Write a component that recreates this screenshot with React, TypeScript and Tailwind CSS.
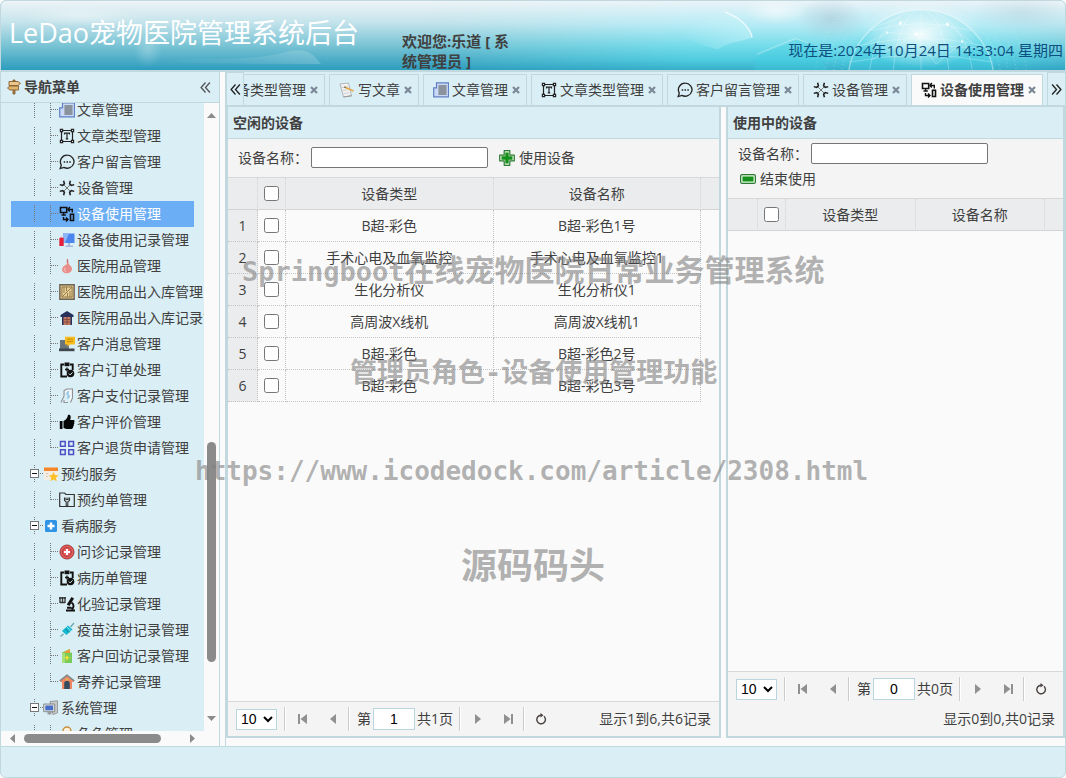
import { useState } from 'react';
import type { ReactNode } from 'react';

// 16px icons used by the menu tree and the tabs
const icons: Record<string, ReactNode> = {
  signpost: (
    <>
      <path d="M7 1h2v14H7z" fill="#b98a4c" stroke="#7a5223" strokeWidth=".8" />
      <path d="M3 2.500h9l2.500 2-2.500 2H3z" fill="#e9c68d" stroke="#8a5d2a" strokeWidth=".9" />
      <path d="M12.500 7H4L1.500 9 4 11h8.500z" fill="#dfb574" stroke="#8a5d2a" strokeWidth=".9" />
    </>
  ),
  write: (
    <>
      <path d="M1 2 9.500 1l3 12.500-8 1.500z" fill="#f1f1ef" stroke="#aab0b5" strokeWidth=".9" />
      <path d="M2.500 5.500 9 4.800M3.500 8.500l5-.6M4.500 11.500l6-.8" stroke="#c3c8cc" strokeWidth=".8" />
      <path d="m6.500 5.500 8 3.500" stroke="#e3a94a" strokeWidth="1.800" />
      <path d="m5.200 4.900 1.600.8" stroke="#7b6a4a" strokeWidth="1.300" />
      <path d="M4.500 15 13 13.800" stroke="#999" strokeWidth="1" />
    </>
  ),
  article: (
    <>
      <path d="M3.500.8h12v14H.7v-9h2.800z" fill="#c9d9f6" stroke="#5f7fc4" strokeWidth="1.200" />
      <path d="M5.500 3h8v10h-8z" fill="#9aa3ad" />
      <path d="M5.500 4h8M5.500 6h8M5.500 8h8M5.500 10h8M5.500 12h8" stroke="#737b85" strokeWidth=".8" />
    </>
  ),
  type: (
    <>
      <path d="M2.500 2.500h11v11h-11z" fill="none" stroke="#222" strokeWidth="1.200" />
      <path d="M.8.800h3.400v3.400H.8zM11.800.800h3.400v3.400h-3.400zM.8 11.800h3.400v3.400H.8zM11.800 11.800h3.400v3.400h-3.400z" fill="#222" />
      <path d="M2 2h1v1H2zM13 2h1v1h-1zM2 13h1v1H2zM13 13h1v1h-1z" fill="#daeef5" />
      <path d="M5.500 6.500V5.200h5v1.300M8 5.200v5.600M6.800 10.800h2.400" fill="none" stroke="#222" strokeWidth="1.200" />
    </>
  ),
  message: (
    <>
      <path d="M8.300 1.200a6.800 6.500 0 1 1-3.400 12.200L1.200 14.600l1.100-3.500A6.600 6.600 0 0 1 8.300 1.200z" fill="none" stroke="#222" strokeWidth="1.300" />
      <path d="M4.700 7.200h1.500v1.500H4.700zM7.500 7.200H9v1.500H7.500zM10.300 7.200h1.500v1.500h-1.500z" fill="#222" />
    </>
  ),
  device: (
    <>
      <path d="m4.500 4.500 7 7M11.500 4.500l-7 7" stroke="#777" strokeWidth="1" />
      <path
        d="M.8 4.600 3.700 5.400 5.400 3.700 4.600.800M15.200 4.600l-2.900.8-1.700-1.700.8-2.900M.8 11.400l2.900-.8 1.700 1.700-.8 2.900M15.200 11.400l-2.900-.8-1.700 1.700.8 2.900"
        fill="none"
        stroke="#1c1c1c"
        strokeWidth="1.500"
      />
    </>
  ),
  usage: (
    <>
      <path d="M1.500 1.500h6.200v5H1.500z" fill="none" stroke="#111" strokeWidth="1.600" />
      <path d="M4.600 7v2M2.500 9h4.300" stroke="#111" strokeWidth="1.400" />
      <path d="M11.500 8.200h3v6.300h-3z" fill="none" stroke="#111" strokeWidth="1.600" />
      <path d="M9.500 3.500h3.800v3M10.800 1 9 3.500l1.800 2M4.500 11v2.500h4M7 11.500l2 2L7 15.500" fill="none" stroke="#111" strokeWidth="1.400" />
    </>
  ),
  usageLog: (
    <>
      <path d="M4 1.500h11.500v9.500H4z" fill="#4b86ee" />
      <path d="M5 1.500h5l-4 9.500H4V3z" fill="#8cb6f8" />
      <path d="M9 11h2v3H9zM6.500 13.500h7.500V15H6.500z" fill="#a6b8dc" />
      <path d="M.3 6h4.400v8H.3z" fill="#e3213c" />
      <path d="M1 4.800h3V6H1z" fill="#f08b98" />
    </>
  ),
  supplies: (
    <>
      <path d="M8.500.8C7.500 3 9 4.500 7.500 6.500 5 7.500 2.700 9.500 3.200 12.500c.5 2 2.500 2.900 4.800 2.800 2.800 0 4.900-1.700 5-4.200 0-2.300-1.600-3.300-3.200-5C9.200 4.500 9.800 2.500 8.500.8z" fill="#e88f8b" />
      <path d="M6 10c-1 1.500-.5 3 .8 3.700" stroke="#f9c8c4" fill="none" />
      <path d="M8.300 1v4" stroke="#c45f60" strokeWidth=".9" />
    </>
  ),
  crate: (
    <>
      <path d="M.8.800h14.400v14.400H.8z" fill="#d8bd83" stroke="#6f6658" strokeWidth="1.400" />
      <path d="M3 3h10v10H3z" fill="#e6cf99" stroke="#8f7747" strokeWidth=".9" />
      <path d="m3 13 10-10M5 3v6M7.500 3v4M8.500 9v4M11 7v6" stroke="#967c48" strokeWidth="1" />
    </>
  ),
  warehouse: (
    <>
      <path d="M8 1 1.500 5v2H3v8h10V7h1.500V5z" fill="#26315c" />
      <path d="M4.500 7h7v8h-7z" fill="#c07862" />
      <path d="M4.500 9.500h7M4.500 12h7M8 7v8" stroke="#7f4538" strokeWidth=".8" />
    </>
  ),
  notice: (
    <>
      <path d="M1 4h9v9H1z" fill="#6b737b" />
      <path d="M0 12.500h15.500v2.700H0z" fill="#3f464e" />
      <path d="M6 .8h10v7.700H11L8.500 10.800V8.500H6z" fill="#f7bd1c" />
      <path d="M8 3.200h6M8 5.600h6" stroke="#c58c05" />
    </>
  ),
  clipboard: (
    <>
      <path d="M5 2.500H2.300v12H8M11 2.500h2.700V8" fill="none" stroke="#111" strokeWidth="1.900" />
      <path d="M5.500.5h5v3.700h-5z" fill="#111" />
      <path d="M8 5.500v4M6 7.500h4" stroke="#111" strokeWidth="1.300" />
      <circle cx="11.500" cy="11.500" r="3.800" fill="#111" />
      <path d="m9.800 11.500 1.400 1.400 2.300-2.500" fill="none" stroke="#daeef5" />
    </>
  ),
  payment: (
    <>
      <path d="M5 2.500 8 1h5.500v9l-2 4.500M5 2.500V8l-3 6.500M5 12v2.500h4" fill="#f2f5f7" stroke="#8c8f94" strokeWidth="1.100" />
      <path d="M10 4C7.500 3.800 7 6.500 9 7s2 2.800-.8 2.800M9 3v8" fill="none" stroke="#8bc6e6" strokeWidth="1.100" />
    </>
  ),
  thumb: (
    <path d="M.8 7h2.700v8H.8zM4.500 7C7 6 8.500 4 9 1c2.500-.7 3.500 1.500 2.200 5h3.300c1.400 0 1.400 1.800.5 2.200.7.800.4 1.900-.3 2.200.4.800.1 1.700-.6 2 .2 1.500-.5 2.400-2 2.600H7.500L4.500 14z" fill="#050505" />
  ),
  grid: (
    <path d="M1.500 1.500h4.700v4.700H1.500zM9.800 1.500h4.700v4.700H9.800zM1.500 9.800h4.700v4.700H1.500zM9.800 9.800h4.700v4.700H9.800z" fill="none" stroke="#4a50c4" strokeWidth="1.500" />
  ),
  booking: (
    <>
      <path d="M1 1.500h14V14H1z" fill="#f3ede4" />
      <path d="M1 1.500h14V5H1z" fill="#f5862c" />
      <path d="M3 7.500h2M3 10.500h2" stroke="#d8c9b5" strokeWidth="1.200" />
      <path d="m10.500 6 1.500 3 3.500.4-2.600 2.300.8 3.500-3.200-1.800-3 1.800.8-3.500L5.800 9.400l3.200-.4z" fill="#fcc02b" />
    </>
  ),
  folder: (
    <>
      <path d="M.7 2.500v12h14.600v-12H7L5.500 1H.7z" fill="none" stroke="#333" strokeWidth="1.200" />
      <path d="M5.500 5.500v3l1.700 1.200V14h1.600V9.700l1.700-1.200v-3M7 5.500v2h2v-2" fill="none" stroke="#333" strokeWidth="1.100" />
    </>
  ),
  cross: (
    <>
      <rect x="2" y="2" width="12" height="12" rx="1.500" fill="#2f93e6" />
      <path d="M6.800 4.500h2.400v2.300h2.300v2.400H9.200v2.300H6.800V9.200H4.500V6.800h2.300z" fill="#fff" />
    </>
  ),
  consult: (
    <>
      <circle cx="8" cy="8" r="7" fill="#e85a5a" stroke="#9b3a3d" />
      <circle cx="8" cy="8" r="4.500" fill="none" stroke="#963c40" strokeWidth=".8" />
      <path d="M7 5h2v2h2v2H9v2H7V9H5V7h2z" fill="#fff" />
    </>
  ),
  lab: (
    <>
      <path d="M1 1v6M3.500 1v6M6 1v6M0 2h7M1 6.500h5" stroke="#333" strokeWidth="1.300" />
      <path d="m12.500 1 2.500 1.500-4.500 7.500-2.700-1.500z" fill="#111" />
      <path d="M12.500 6.500c3 2 2.500 5.500 0 6.700M7 14.500h9M8 11.800h4.500" fill="none" stroke="#111" strokeWidth="1.900" />
    </>
  ),
  vaccine: (
    <>
      <path d="m3 9 6-5.500 4.500 4L7.500 13z" fill="#15b8cf" />
      <path d="m11.500 5 3.500-4M4.500 12l-3 2.500" stroke="#6aa7b4" strokeWidth="1.300" />
      <path d="m6.500 6.500 3.500 4" stroke="#0d8095" strokeWidth=".9" />
      <path d="m8 5 3.500 4" stroke="#b5f0f6" strokeWidth=".8" />
    </>
  ),
  visit: (
    <>
      <path d="M3 4.500 11 1v3.500h2V15H3z" fill="#79cc5a" />
      <path d="m4 4.500 7-3.500v4z" fill="#f09a35" />
      <path d="M3 5h3v10H3z" fill="#a6e07c" />
      <path d="m8 7 1 2 2 .5-2 1-1 2.500-1-2.500-2-1 2-.5z" fill="#f7e02f" />
    </>
  ),
  boarding: (
    <>
      <path d="M8 .8.500 6.500l1 1.500H3v7h10V8h1.500l1-1.500z" fill="#f08763" />
      <path d="M.8 6.800 8 1.200l7.200 5.600" fill="none" stroke="#7c8a90" strokeWidth="1.500" />
      <path d="M5.200 15V9.500a2.800 2.800 0 0 1 5.600 0V15z" fill="#374b5f" />
      <path d="M6.500 4.500h3v2h-3z" fill="#e0b056" />
    </>
  ),
  system: (
    <>
      <path d="M7 1.500 14.500.8v12L10 14.500z" fill="#c8c9c8" stroke="#898c8e" strokeWidth=".8" />
      <path d="M.7 4h11v7.700H.7z" fill="#dedfdd" stroke="#7f8487" strokeWidth=".9" />
      <path d="M2.300 5.500h7.800v4.800H2.300z" fill="#456fc9" />
      <path d="M4.500 12h4v2.500h-4z" fill="#999c9d" />
    </>
  ),
  role: (
    <>
      <circle cx="8" cy="5" r="4" fill="#fff0d8" stroke="#c9903d" strokeWidth="1.500" />
      <path d="M2 15c0-5 12-5 12 0z" fill="#c9903d" />
    </>
  ),
  add: (
    <>
      <path d="M5.200.7h5.600v4.500h4.500v5.600h-4.500v4.500H5.200v-4.500H.7V5.200h4.500z" fill="#e4f6df" stroke="#2c7a33" strokeWidth="1.200" strokeLinejoin="round" />
      <path d="M6.300 2.500h3.400v3.800h3.800v3.400H9.700v3.800H6.300V9.700H2.500V6.300h3.800z" fill="#16901c" />
    </>
  ),
  remove: (
    <>
      <rect x=".6" y="3.600" width="14.800" height="8.800" rx="1.500" fill="#e4f6df" stroke="#2c7a33" strokeWidth="1.200" />
      <path d="M2.500 5.500h11v5h-11z" fill="#16901c" />
    </>
  ),
};

function Icon({ name }: { name: string }) {
  return (
    <svg viewBox="0 0 16 16" className="h-4 w-4 shrink-0" aria-hidden="true">
      {icons[name]}
    </svg>
  );
}

type TreeItem = { label: string; icon: string; group?: boolean; last?: boolean };

const treeItems: TreeItem[] = [
  { label: '文章管理', icon: 'article' },
  { label: '文章类型管理', icon: 'type' },
  { label: '客户留言管理', icon: 'message' },
  { label: '设备管理', icon: 'device' },
  { label: '设备使用管理', icon: 'usage' },
  { label: '设备使用记录管理', icon: 'usageLog' },
  { label: '医院用品管理', icon: 'supplies' },
  { label: '医院用品出入库管理', icon: 'crate' },
  { label: '医院用品出入库记录管理', icon: 'warehouse' },
  { label: '客户消息管理', icon: 'notice' },
  { label: '客户订单处理', icon: 'clipboard' },
  { label: '客户支付记录管理', icon: 'payment' },
  { label: '客户评价管理', icon: 'thumb' },
  { label: '客户退货申请管理', icon: 'grid', last: true },
  { label: '预约服务', icon: 'booking', group: true },
  { label: '预约单管理', icon: 'folder', last: true },
  { label: '看病服务', icon: 'cross', group: true },
  { label: '问诊记录管理', icon: 'consult' },
  { label: '病历单管理', icon: 'clipboard' },
  { label: '化验记录管理', icon: 'lab' },
  { label: '疫苗注射记录管理', icon: 'vaccine' },
  { label: '客户回访记录管理', icon: 'visit' },
  { label: '寄养记录管理', icon: 'boarding', last: true },
  { label: '系统管理', icon: 'system', group: true },
  { label: '角色管理', icon: 'role' },
];

const tabs = [
  { label: '设备类型管理', icon: 'type' },
  { label: '写文章', icon: 'write' },
  { label: '文章管理', icon: 'article' },
  { label: '文章类型管理', icon: 'type' },
  { label: '客户留言管理', icon: 'message' },
  { label: '设备管理', icon: 'device' },
  { label: '设备使用管理', icon: 'usage' },
];

const idleDevices = [
  { type: 'B超-彩色', name: 'B超-彩色1号' },
  { type: '手术心电及血氧监控', name: '手术心电及血氧监控1' },
  { type: '生化分析仪', name: '生化分析仪1' },
  { type: '高周波X线机', name: '高周波X线机1' },
  { type: 'B超-彩色', name: 'B超-彩色2号' },
  { type: 'B超-彩色', name: 'B超-彩色3号' },
];

type Device = { type: string; name: string };

// Dotted connector lines in front of a tree node
function TreeLine({ kind }: { kind: 'line' | 'join' | 'end' | 'expander' }) {
  return (
    <svg viewBox="0 0 16 18" className="h-[18px] w-4 shrink-0" aria-hidden="true" shapeRendering="crispEdges">
      {kind === 'end' ? (
        <path d="M7.500 0v9" stroke="#777" strokeDasharray="1 1" />
      ) : (
        <path d="M7.500 0v18" stroke="#777" strokeDasharray="1 1" />
      )}
      {(kind === 'join' || kind === 'end') && <path d="M8 8.500h8" stroke="#777" strokeDasharray="1 1" />}
      {kind === 'expander' && (
        <>
          <path d="M13 8.500h3" stroke="#777" strokeDasharray="1 1" />
          <rect x="3.500" y="4.500" width="8" height="8" fill="#fff" stroke="#777" />
          <path d="M5 8.500h5" stroke="#111" />
        </>
      )}
    </svg>
  );
}

function Chevrons({ right }: { right?: boolean }) {
  return (
    <svg viewBox="0 0 10 10" className="h-[11px] w-[11px]" fill="none" stroke="currentColor" strokeWidth="1.200" aria-hidden="true">
      {right ? <path d="m1 .5 4 4.500-4 4.500M5 .5 9 5 5 9.500" /> : <path d="M5 .5 1 5l4 4.500M9 .5 5 5l4 4.500" />}
    </svg>
  );
}

function Header() {
  return (
    <header className="relative h-[71px] shrink-0 overflow-hidden rounded-t-md border border-[#c0d8de] bg-[#8fd3e2]">
      <svg viewBox="0 0 1064 70" preserveAspectRatio="none" className="absolute inset-0 h-full w-full" aria-hidden="true">
        <defs>
          <linearGradient id="sky" x1="0" y1="0" x2="0" y2="1">
            <stop offset="0" stopColor="#edf4f7" />
            <stop offset=".3" stopColor="#c6e4ec" />
            <stop offset=".65" stopColor="#78c3d4" />
            <stop offset="1" stopColor="#2c9cbd" />
          </linearGradient>
          <linearGradient id="aqua" x1="0" y1="0" x2="0" y2="1">
            <stop offset="0" stopColor="#eaf3f8" />
            <stop offset=".35" stopColor="#b5ebf5" />
            <stop offset=".65" stopColor="#74dcea" />
            <stop offset=".85" stopColor="#50cce0" />
            <stop offset="1" stopColor="#37afca" />
          </linearGradient>
          <linearGradient id="fade" x1="0" y1="0" x2="1" y2="0">
            <stop offset=".4" stopColor="#000" />
            <stop offset=".65" stopColor="#fff" />
            <stop offset=".93" stopColor="#fff" />
            <stop offset="1" stopColor="#777" />
          </linearGradient>
          <mask id="right">
            <rect width="1064" height="70" fill="url(#fade)" />
          </mask>
          <radialGradient id="glow">
            <stop offset="0" stopColor="#fff" stopOpacity=".9" />
            <stop offset="1" stopColor="#fff" stopOpacity="0" />
          </radialGradient>
          <radialGradient id="haze">
            <stop offset="0" stopColor="#9fbccb" stopOpacity=".45" />
            <stop offset="1" stopColor="#9fbccb" stopOpacity="0" />
          </radialGradient>
          <linearGradient id="tile" x1="0" y1="0" x2="1" y2="0">
            <stop offset="0" stopColor="#c8f4fa" stopOpacity="0" />
            <stop offset="1" stopColor="#c8f4fa" stopOpacity=".5" />
          </linearGradient>
          <linearGradient id="streak" x1="0" y1="0" x2="1" y2="0">
            <stop offset="0" stopColor="#fff" stopOpacity="0" />
            <stop offset=".6" stopColor="#fff" stopOpacity=".1" />
            <stop offset="1" stopColor="#fff" stopOpacity=".18" />
          </linearGradient>
        </defs>
        <rect width="1064" height="70" fill="url(#sky)" />
        <rect width="1064" height="70" fill="url(#aqua)" mask="url(#right)" />
        <ellipse cx="80" cy="15" rx="60" ry="10" fill="url(#glow)" opacity=".4" />
        <path d="M150 63c40-8 90 0 130-10 20-6 30-4 40 11z" fill="url(#streak)" />
        <ellipse cx="147" cy="50" rx="14" ry="18" fill="url(#glow)" opacity=".25" />
        <path d="M680 32 724 11l12 6c6 4 14 12 15 20-10 4-24 4-34 12-12-2-26-8-37-17z" fill="url(#tile)" />
        <path d="m724 11 12 6c6 4 14 12 15 20" fill="none" stroke="#fff" strokeWidth="1.500" opacity=".7" />
        <path d="M754 70c-2-10 4-16 16-20l26-11 16 5 14 26z" fill="#3fcfe0" opacity=".35" />
        <path d="m756 54 38-16 14 5" fill="none" stroke="#fff" opacity=".35" />
        <ellipse cx="775" cy="10" rx="32" ry="14" fill="url(#glow)" opacity=".6" />
        <ellipse cx="830" cy="18" rx="34" ry="22" fill="url(#haze)" />
        <ellipse cx="1020" cy="12" rx="50" ry="20" fill="url(#haze)" opacity=".6" />
        <circle cx="920" cy="82" r="73" fill="#3fcfe2" opacity=".25" />
        <ellipse cx="920" cy="34" rx="60" ry="34" fill="url(#glow)" />
        <g fill="none" stroke="#fff" strokeWidth=".7" opacity=".4">
          <circle cx="920" cy="82" r="73" strokeWidth="1.400" />
          <ellipse cx="920" cy="82" rx="52" ry="73" />
          <ellipse cx="920" cy="82" rx="28" ry="73" />
          <path d="M920 9v61M870 30q50-14 100 0M856 46q64-16 128 0M848 62q72-14 144 0" />
          <path d="m868 29 30-12 18 16 30-10 26 20M855 48l32-16 28 2 34 12 34 2M870 60l45-26 20 30 24-20" />
        </g>
        <g fill="none" stroke="#fff" strokeDasharray="1 3" opacity=".35">
          <circle cx="920" cy="82" r="80" />
          <circle cx="920" cy="82" r="88" />
          <circle cx="920" cy="82" r="96" />
          <circle cx="920" cy="82" r="106" />
        </g>
        <path d="M898 21h3v3h-3zM914 32h3v3h-3zM945 22h3v3h-3zM885 31h2v2h-2zM960 40h2v2h-2z" fill="#fff" opacity=".8" />
      </svg>
      <div className="relative flex h-full">
        <h1 className="w-[401px] shrink-0 pt-3 pl-2 text-[27px] leading-10 whitespace-nowrap text-white">
          LeDao宠物医院管理系统后台
        </h1>
        <p className="w-[120px] shrink-0 pt-[30px] text-[15px] leading-5 font-bold text-[#404040]">
          欢迎您:乐道 [ 系统管理员 ]
        </p>
        <p className="ml-auto self-end pr-0.5 pb-2 text-[15px] leading-6 whitespace-nowrap text-[#0b5080]">
          现在是:2024年10月24日 14:33:04 星期四
        </p>
      </div>
    </header>
  );
}

function Sidebar() {
  const [selected, setSelected] = useState(4);

  return (
    <aside className="flex w-[220px] shrink-0 flex-col border-x border-[#c0d8de] bg-[#fafafa]">
      <div className="flex h-[31px] shrink-0 items-center border-b border-[#c0d8de] bg-[#daeef5] pr-2 pl-[5px]">
        <Icon name="signpost" />
        <h2 className="ml-0.5 flex-1 text-sm leading-5 font-bold">导航菜单</h2>
        <button type="button" aria-label="折叠菜单" className="text-[#555]">
          <Chevrons />
        </button>
      </div>
      <div className="flex min-h-0 flex-1">
        <nav className="min-w-0 flex-1 overflow-hidden bg-[#daeef5]">
          <ul className="-mt-1.5 px-2.5">
            {treeItems.map(({ label, icon, group, last }, i) => (
              <li key={label}>
                <button
                  type="button"
                  onClick={() => setSelected(i)}
                  className={`${
                    selected === i ? 'bg-[#6caef5] text-white' : ''
                  } flex h-[26px] w-full items-center pl-4 text-sm leading-5 whitespace-nowrap`}
                >
                  {group ? (
                    <TreeLine kind="expander" />
                  ) : (
                    <>
                      <TreeLine kind="line" />
                      <TreeLine kind={last ? 'end' : 'join'} />
                    </>
                  )}
                  <Icon name={icon} />
                  <span className="ml-0.5">{label}</span>
                </button>
              </li>
            ))}
          </ul>
        </nav>
        <div className="flex w-[15px] shrink-0 flex-col items-center py-2.5">
          <svg viewBox="0 0 9 5" className="h-[5px] w-[9px]" aria-hidden="true">
            <path d="M4.500 0 9 5H0z" fill="#8b8b8b" />
          </svg>
          <div className="mt-auto mb-[54px] h-[220px] w-[9px] rounded-full bg-[#8b8b8b]" />
          <svg viewBox="0 0 9 5" className="h-[5px] w-[9px]" aria-hidden="true">
            <path d="M0 0h9L4.500 5z" fill="#8b8b8b" />
          </svg>
        </div>
      </div>
      <div className="flex h-[15px] shrink-0 items-center pr-6 pl-[9px]">
        <svg viewBox="0 0 5 9" className="h-[9px] w-[5px]" aria-hidden="true">
          <path d="M5 0v9L0 4.500z" fill="#8b8b8b" />
        </svg>
        <div className="ml-[9px] h-[9px] w-[137px] rounded-full bg-[#8b8b8b]" />
        <svg viewBox="0 0 5 9" className="ml-auto h-[9px] w-[5px]" aria-hidden="true">
          <path d="M0 0v9l5-4.500z" fill="#8b8b8b" />
        </svg>
      </div>
    </aside>
  );
}

function TabBar() {
  const [active, setActive] = useState(6);

  return (
    <div className="flex h-[35px] shrink-0 border-b-2 border-l border-[#c0d8de] bg-[#daeef5]">
      <button type="button" aria-label="向左滚动" className="flex w-[17px] shrink-0 items-center justify-center border-t border-r border-[#c0d8de] text-[#222]">
        <Chevrons />
      </button>
      <div className="flex min-w-0 flex-1 justify-end gap-1 overflow-hidden pt-0.5 pr-1">
        {tabs.map(({ label, icon }, i) => (
          <div
            key={label}
            className={`${
              active === i ? 'bg-[#fafafa] font-bold' : ''
            } flex shrink-0 items-center border border-b-0 border-[#c0d8de] pr-1.5 pl-[9px] text-sm leading-5`}
          >
            <button type="button" onClick={() => setActive(i)} className="flex items-center gap-[3px] whitespace-nowrap">
              <Icon name={icon} />
              {label}
            </button>
            <button type="button" aria-label={`关闭${label}`} className="ml-1">
              <svg viewBox="0 0 8 8" className="h-2 w-2" stroke="#7c8898" strokeWidth="2.200" aria-hidden="true">
                <path d="m1 1 6 6M7 1 1 7" />
              </svg>
            </button>
          </div>
        ))}
      </div>
      <button type="button" aria-label="向右滚动" className="flex w-[18px] shrink-0 items-center justify-center border-t border-l border-[#c0d8de] text-[#222]">
        <Chevrons right />
      </button>
    </div>
  );
}

function DeviceTable({ rows }: { rows: Device[] }) {
  return (
    <table className="w-full table-fixed border-separate border-spacing-0 text-center text-sm leading-5">
      <colgroup>
        <col className="w-[30px]" />
        <col className="w-7" />
        <col />
        <col />
        <col className="w-[18px]" />
      </colgroup>
      <thead>
        <tr className="bg-[#ebecee]">
          <th className="h-8 border-r border-b border-[#d4d4d4] [border-right-style:dotted] p-0" />
          <th className="border-r border-b border-[#d4d4d4] [border-right-style:dotted] p-0">
            <input type="checkbox" aria-label="全选" className="mx-auto block h-[15px] w-[15px]" />
          </th>
          <th className="border-r border-b border-[#d4d4d4] [border-right-style:dotted] p-0 font-normal">设备类型</th>
          <th className="border-r border-b border-[#d4d4d4] [border-right-style:dotted] p-0 font-normal">设备名称</th>
          <th className="border-b border-[#d4d4d4] p-0" />
        </tr>
      </thead>
      <tbody>
        {rows.map(({ type, name }, i) => (
          <tr key={i}>
            <td className="h-8 border-r border-b border-dotted border-[#c4c4c4] bg-[#ebecee] p-0">{i + 1}</td>
            <td className="border-r border-b border-dotted border-[#c4c4c4] p-0">
              <input type="checkbox" aria-label={name} className="mx-auto block h-[15px] w-[15px]" />
            </td>
            <td className="border-r border-b border-dotted border-[#c4c4c4] p-0">{type}</td>
            <td className="border-r border-b border-dotted border-[#c4c4c4] p-0">{name}</td>
            <td className="p-0" />
          </tr>
        ))}
      </tbody>
    </table>
  );
}

function PageButton({ label, path }: { label: string; path: string }) {
  return (
    <button type="button" aria-label={label} className="flex h-6 w-[30px] shrink-0 items-center justify-center">
      <svg viewBox="0 0 10 10" className="h-2.5 w-2.5" fill="#909090" aria-hidden="true">
        <path d={path} />
      </svg>
    </button>
  );
}

function Separator() {
  return <div className="mr-0.5 h-6 w-0.5 shrink-0 border-r border-l border-r-white border-l-[#ccc]" />;
}

function Pager({ page, pages, info }: { page: number; pages: number; info: string }) {
  return (
    <div className="flex shrink-0 flex-wrap items-center gap-y-1.5 border-t border-[#d8d8d8] bg-[#f4f4f4] px-2 py-[5px] text-sm">
      <div className="flex h-6 items-center whitespace-nowrap">
        <select
          aria-label="每页条数"
          className="mr-[7px] h-[21px] w-[41px] shrink-0 border border-[#b9d6de] bg-white font-['Liberation_Sans',sans-serif] text-sm leading-4 text-black"
        >
          <option>10</option>
          <option>20</option>
          <option>50</option>
        </select>
        <Separator />
        <PageButton label="首页" path="M0 0h2v10H0zM9 0v10L2.500 5z" />
        <PageButton label="上一页" path="M8 0v10L2 5z" />
        <Separator />
        <label className="ml-[5px] flex shrink-0 items-center gap-0.5">
          第
          <input
            type="text"
            defaultValue={page}
            className="h-[22px] w-[42px] border border-[#b9d6de] bg-white text-center font-['Liberation_Sans',sans-serif] text-sm text-black"
          />
        </label>
        <span className="mr-1.5 ml-0.5 leading-5">共{pages}页</span>
        <Separator />
        <PageButton label="下一页" path="M2 0v10l6-5z" />
        <PageButton label="末页" path="M8 0h2v10H8zM1 0v10l6.500-5z" />
        <Separator />
        <button type="button" aria-label="刷新" className="ml-2 flex h-6 shrink-0 items-center">
          <svg viewBox="0 0 12 12" className="h-3 w-3" fill="none" stroke="#4a4340" strokeWidth="1.400" aria-hidden="true">
            <path d="M9 3.300A4.300 4.300 0 1 1 6 2.200" />
            <path d="M5.500 0v4.500l3-2.200z" fill="#4a4340" stroke="none" />
          </svg>
        </button>
      </div>
      <p className="ml-auto h-6 text-right leading-6 whitespace-nowrap">{info}</p>
    </div>
  );
}

function DevicePanel({
  title,
  action,
  icon,
  rows,
  pages,
  info,
  className,
}: {
  title: string;
  action: string;
  icon: string;
  rows: Device[];
  pages: number;
  info: string;
  className: string;
}) {
  const wide = rows.length > 0;

  return (
    <section className={`${className} flex flex-col border-2 border-t-0 border-[#c0d8de]`}>
      <h2 className="h-8 shrink-0 border-b border-[#c0d8de] bg-[#daeef5] pl-[5px] text-sm leading-[31px] font-bold">{title}</h2>
      <div
        className={`${
          wide ? 'items-center pt-2' : 'pt-1'
        } flex shrink-0 flex-wrap gap-x-[11px] gap-y-1 border-b border-[#d8d8d8] bg-[#f4f4f4] px-2.5 pb-[9px] text-sm leading-[21px]`}
      >
        <label className="flex items-center gap-[3px]">
          <span className="w-[70px]">设备名称：</span>
          <input type="text" className="h-[21px] w-[177px] rounded-xs border border-[#767676] bg-white px-1" />
        </label>
        <div className={wide ? '' : 'w-full pl-0.5'}>
          <button type="button" className="flex items-center gap-1">
            <Icon name={icon} />
            {action}
          </button>
        </div>
      </div>
      <div className="min-h-0 flex-1 overflow-hidden bg-[#fafafa]">
        <DeviceTable rows={rows} />
      </div>
      <Pager page={pages} pages={pages} info={info} />
    </section>
  );
}

// Semi-transparent captions laid over the whole page
function Watermark() {
  return (
    <div className="pointer-events-none absolute inset-0 overflow-hidden font-['DejaVu_Sans_Mono','Noto_Sans_CJK_SC',monospace] font-bold whitespace-nowrap text-[#808080]/60">
      <p className="absolute top-[251px] left-[242px] text-[30px] leading-10">
        <span className="text-[27px]">Springboot</span>在线宠物医院日常业务管理系统
      </p>
      <p className="absolute top-[353px] left-[350px] text-[27px] leading-10">管理员角色-设备使用管理功能</p>
      <p className="absolute top-[451px] left-[195px] text-[26px] leading-10">https://www.icodedock.com/article/2308.html</p>
      <p className="absolute top-[542px] left-[461px] text-[36px] leading-[50px]">源码码头</p>
    </div>
  );
}

export default function App() {
  return (
    <div className="relative flex h-screen flex-col overflow-hidden bg-[#fafafa] font-['Open_Sans','Noto_Sans_CJK_SC',sans-serif] text-[#404040]">
      <Header />
      <div className="flex min-h-0 flex-1 gap-[5px] border-t border-r border-[#c0d8de]">
        <Sidebar />
        <main className="flex min-w-0 flex-1 flex-col border-l border-[#c0d8de]">
          <TabBar />
          <div className="flex min-h-0 flex-1 gap-[5px] pb-2">
            <DevicePanel
              className="min-w-0 flex-1"
              title="空闲的设备"
              action="使用设备"
              icon="add"
              rows={idleDevices}
              pages={1}
              info="显示1到6,共6记录"
            />
            <DevicePanel
              className="w-[339px] shrink-0"
              title="使用中的设备"
              action="结束使用"
              icon="remove"
              rows={[]}
              pages={0}
              info="显示0到0,共0记录"
            />
          </div>
        </main>
      </div>
      <footer className="h-8 shrink-0 rounded-b-md border border-[#c0d8de] bg-[#daeef5]" />
      <Watermark />
    </div>
  );
}
